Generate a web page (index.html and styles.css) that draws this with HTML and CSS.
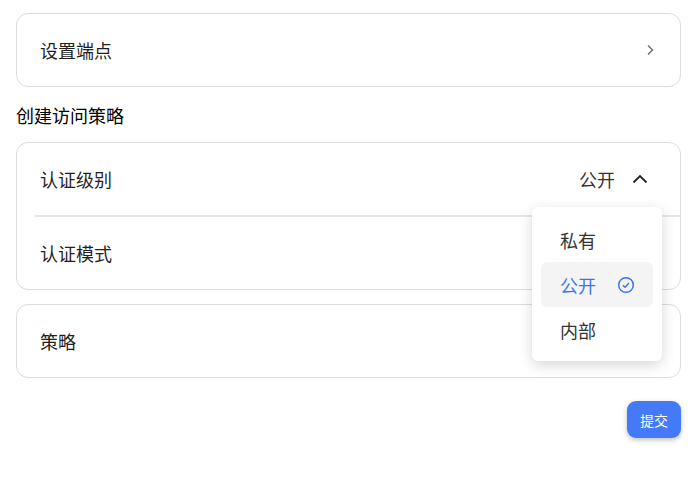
FILE: index.html
```html
<html>
  <head>
    <meta charset="utf-8" />
    <link rel="stylesheet" href="styles.css">
  </head>
  <body>
    <div class="page">
      <div class="card">
        <div class="row">
          <span class="label">设置端点</span>
          <svg class="arrow-right" width="8" height="12" viewBox="0 0 8 12">
            <path d="M2 1.5 L6.5 6 L2 10.5" fill="none" stroke="#666" stroke-width="1.3" />
          </svg>
        </div>
      </div>

      <h2 class="section-title">创建访问策略</h2>

      <div class="card has-menu">
        <div class="row">
          <span class="label">认证级别</span>
          <span class="value">公开</span>
          <svg class="arrow-up" width="16" height="10" viewBox="0 0 16 10">
            <path d="M1.5 8.5 L8 2 L14.5 8.5" fill="none" stroke="#222" stroke-width="1.8" />
          </svg>
        </div>
        <div class="divider"></div>
        <div class="row">
          <span class="label">认证模式</span>
        </div>

        <div class="menu">
          <div class="menu-item">私有</div>
          <div class="menu-item is-active">
            公开
            <svg width="18" height="18" viewBox="0 0 18 18">
              <circle cx="9" cy="9" r="7.3" fill="none" stroke="#3f72f0" stroke-width="1.5" />
              <path d="M5.8 9.2 L8 11.2 L12 7" fill="none" stroke="#3f72f0" stroke-width="1.5" />
            </svg>
          </div>
          <div class="menu-item">内部</div>
        </div>
      </div>

      <div class="card">
        <div class="row">
          <span class="label">策略</span>
        </div>
      </div>

      <div class="actions">
        <button class="btn-submit">提交</button>
      </div>
    </div>
  </body>
</html>
```

FILE: styles.css
```css
body {
  margin: 0;
  background: #fff;
  font-family: "Noto Sans CJK SC", "Noto Sans", sans-serif;
  color: #1f1f1f;
}
.page {
  padding: 13px 9px 0 16px;
}
.card {
  border: 1px solid #dcdcdc;
  border-radius: 12px;
  background: #fff;
}
.has-menu {
  position: relative;
}
.card + .card {
  margin-top: 14px;
}
.row {
  display: flex;
  align-items: center;
  height: 72px;
  padding: 0 26px 0 23px;
}
.label {
  font-size: 18px;
  flex: 1;
}
.value {
  font-size: 18px;
  color: #333;
  margin-right: 17px;
}
.arrow-up {
  margin-right: 6px;
}
.divider {
  height: 2px;
  background: #e6e6e6;
  margin-left: 18px;
}
.section-title {
  margin: 15px 0 14px;
  font-size: 18px;
  font-weight: 400;
  line-height: 26px;
  color: #000;
}
.menu {
  position: absolute;
  top: 64px;
  right: 18px;
  width: 112px;
  padding: 10px 9px 9px;
  background: #fff;
  border-radius: 6px;
  box-shadow: 0 4px 14px rgba(0, 0, 0, 0.16);
}
.menu-item {
  display: flex;
  align-items: center;
  height: 45px;
  padding-left: 19px;
  font-size: 18px;
  color: #333;
  border-radius: 6px;
}
.menu-item svg {
  margin-left: 21px;
}
.is-active {
  background: #f4f4f5;
  color: #3f72f0;
}
.actions {
  display: flex;
  justify-content: flex-end;
  margin-top: 23px;
}
.btn-submit {
  width: 54px;
  height: 37px;
  border: 0;
  border-radius: 9px;
  background: #4479f7;
  color: #fff;
  font-family: "Noto Sans CJK SC", sans-serif;
  font-size: 14px;
  box-shadow: 0 2px 5px rgba(0, 0, 0, 0.25);
}
```
